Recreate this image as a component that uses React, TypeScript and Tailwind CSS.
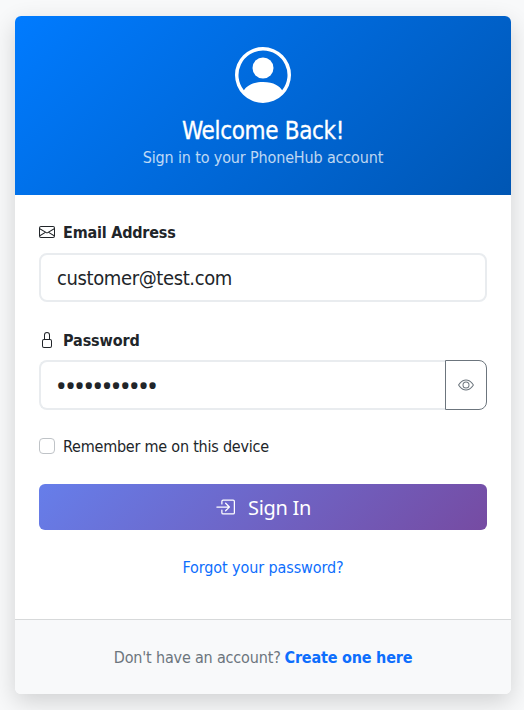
import { BsBoxArrowInRight, BsEnvelope, BsEye, BsLock, BsPersonCircle } from "react-icons/bs";

export default function App() {
  return (
    <div className="h-[710px] w-[524px] overflow-hidden bg-[#f8f9fa] pl-[15px] pt-4 font-['DejaVu_Sans_Condensed','DejaVu_Sans',sans-serif] text-base leading-6 text-[#212529] [font-stretch:condensed]">
      <main className="flex h-[678px] w-[496px] flex-col overflow-hidden rounded-[6px] bg-white shadow-[0_8px_24px_rgba(0,0,0,0.16)]">
        <header className="flex h-[179px] flex-col items-center bg-[linear-gradient(135deg,#007bff_0%,#0056b3_100%)] pt-[31px] text-white">
          <BsPersonCircle className="size-14" />
          <h1 className="mt-[14px] text-2xl leading-[29px] tracking-[-0.35px] [-webkit-text-stroke:0.3px_white]">Welcome Back!</h1>
          <p className="leading-6 tracking-[-0.15px] text-white/75">Sign in to your PhoneHub account</p>
        </header>
        <form className="flex flex-1 flex-col px-6 pt-[25px]">
          <label className="flex h-6 items-center gap-2 font-bold tracking-[-0.2px]">
            <BsEnvelope /> <span className="pt-0.5">Email Address</span>
          </label>
          <input
            className="mt-[9px] h-[49px] w-full rounded-lg border-2 border-[#e9ecef] bg-white px-4 pt-px text-xl tracking-[-0.38px]"
            defaultValue="customer@test.com"
          />
          <label className="mt-[26px] flex h-6 items-center gap-2 font-bold tracking-[-0.1px]">
            <BsLock /> <span className="pt-0.5">Password</span>
          </label>
          <div className="mt-2 flex h-[50px]">
            <input
              type="password"
              className="w-[406px] rounded-l-lg border-2 border-r-0 border-[#e9ecef] bg-white px-[15px] font-['Noto_Sans',sans-serif] text-[28px] tracking-[-1.4px]"
              defaultValue="password123"
            />
            <button type="button" className="flex flex-1 items-center justify-center rounded-r-lg border border-[#6c757d] text-[#6c757d]">
              <BsEye />
            </button>
          </div>
          <label className="mt-[24px] flex h-6 items-center gap-2 tracking-[-0.22px]">
            <input type="checkbox" className="size-4 appearance-none rounded-[4px] border border-[#bfc3c7]" />
            <span className="pt-0.5">Remember me on this device</span>
          </label>
          <button type="button" className="mt-[26px] flex h-[46px] items-center justify-center gap-[13px] rounded-[6px] bg-[linear-gradient(135deg,#667eea_0%,#764ba2_100%)] text-xl text-white">
            <BsBoxArrowInRight /> <span className="pt-px font-['Noto_Sans',sans-serif] tracking-[-0.3px]">Sign In</span>
          </button>
          <a className="mt-[26px] self-center tracking-[-0.1px] text-[#0d6efd]">Forgot your password?</a>
        </form>
        <footer className="flex h-[75px] items-center justify-center gap-1 border-t border-[#d7d9da] bg-[#f8f9fa] pt-0.5 text-[#6c757d]">
          <span className="tracking-[-0.17px]">Don't have an account?</span>
          <a className="font-bold tracking-[-0.2px] text-[#0d6efd]">Create one here</a>
        </footer>
      </main>
    </div>
  );
}
